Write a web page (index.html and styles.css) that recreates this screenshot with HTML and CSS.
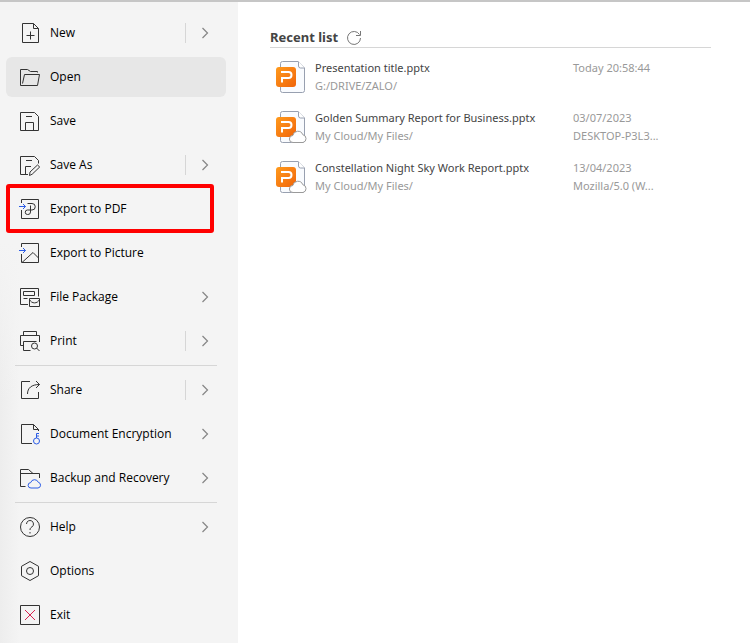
FILE: index.html
```html
<!DOCTYPE html>
<html lang="en">
<head>
    <meta charset="UTF-8">
    <meta name="viewport" content="width=device-width, initial-scale=1.0">
    <title>Open</title>
    <link rel="stylesheet" href="styles.css">
</head>
<body>
    <!-- Shared shapes -->
    <svg class="sprite" aria-hidden="true">
        <defs>
            <linearGradient id="orange" x1="0" y1="0" x2="1" y2="1">
                <stop offset="0" stop-color="#ff9a1c"/>
                <stop offset="1" stop-color="#f0640a"/>
            </linearGradient>
        </defs>
        <symbol id="chevron" viewBox="0 0 8 12">
            <path d="M1.5 1l5 5-5 5" fill="none" stroke="#858585" stroke-width="1.2"/>
        </symbol>
        <symbol id="pptx" viewBox="0 0 32 32">
            <path d="M6.5.5H22l6.5 6.500V29.500a2 2 0 0 1-2 2h-20a2 2 0 0 1-2-2v-27a2 2 0 0 1 2-2z" fill="#f9fbfe" stroke="#98a0b0"/>
            <path d="M22.500.5V5a2 2 0 0 0 2 2h4" fill="#fff" stroke="#98a0b0"/>
            <rect x="0" y="6" width="20" height="20" rx="3" fill="url(#orange)"/>
            <path d="M5 11h7.500a2.500 2.500 0 0 1 0 6H6v4.500" fill="none" stroke="#fff" stroke-width="2"/>
        </symbol>
        <symbol id="cloud" viewBox="0 0 32 32">
            <path d="M17 31.500a3.500 3.500 0 0 1-.2-7 5.200 5.200 0 0 1 10-.8 4 4 0 0 1 .2 7.800z" fill="#fff" stroke="#9a9a9a"/>
        </symbol>
    </svg>

    <div class="window">
        <nav class="sidebar">
            <button class="menu-item">
                <svg class="icon" viewBox="0 0 24 24"><path d="M4.500 2.500h11l5 5v14h-16zM15.500 2.500v5h5M12.500 10.500v8M8.500 14.500h8"/></svg>
                <span class="label">New</span>
                <span class="divider"></span>
                <svg class="chevron"><use href="#chevron"/></svg>
            </button>
            <button class="menu-item active">
                <svg class="icon" viewBox="0 0 24 24"><path d="M19.500 7.500v-1h-7l-3-2h-7v16h17l2-11h-15l-2 9"/></svg>
                <span class="label">Open</span>
            </button>
            <button class="menu-item">
                <svg class="icon" viewBox="0 0 24 24"><path d="M2.500 3.500h14l4 4v14h-18zM8 7.500h6M7.500 21.500v-8h8v8"/></svg>
                <span class="label">Save</span>
            </button>
            <button class="menu-item">
                <svg class="icon" viewBox="0 0 24 24"><path d="M10 21.500H2.500v-18h14l4 4v3M8 7.500h6M7.500 21.500v-8H13M11.500 22.500l.5-3.500 7.500-7 2.200 2-7.500 7.200z"/></svg>
                <span class="label">Save As</span>
                <span class="divider"></span>
                <svg class="chevron"><use href="#chevron"/></svg>
            </button>
            <button class="menu-item marked">
                <svg class="icon" viewBox="0 0 24 24">
                    <path d="M3.500 6V2.500h17v19h-17V13"/>
                    <path d="M9.500 6.500H14a3 3 0 0 1 0 6.500H9.500a2.200 2.200 0 0 0 0 4.500h.5a2.500 2.500 0 0 0 2.500-2.500V8.500"/>
                    <path class="blue" d="M1 9.500h6.500M5 7l2.500 2.500L5 12"/>
                </svg>
                <span class="label">Export to PDF</span>
            </button>
            <button class="menu-item">
                <svg class="icon" viewBox="0 0 24 24">
                    <path d="M3.500 6V2.500h17v19h-17V13M4 21.500l11-10 5.500 5.500"/>
                    <path class="blue" d="M1 9.500h6.500M5 7l2.500 2.500L5 12"/>
                </svg>
                <span class="label">Export to Picture</span>
            </button>
            <button class="menu-item">
                <svg class="icon" viewBox="0 0 24 24"><path d="M10 19.500H2.500v-16h18v8M5.500 6.500h11v4h-11zM5.500 13.500h4M11.500 13.500h10v8h-10zM11.500 14.500c2 4.500 8 4.500 10 0"/></svg>
                <span class="label">File Package</span>
                <svg class="chevron"><use href="#chevron"/></svg>
            </button>
            <button class="menu-item">
                <svg class="icon" viewBox="0 0 24 24"><path d="M5.500 6.500v-4h13v4M5 16.500H2.500v-10h19V13M12.500 21.500h-7v-9h13M18.500 19l3 3"/><circle cx="16.500" cy="17" r="3"/></svg>
                <span class="label">Print</span>
                <span class="divider"></span>
                <svg class="chevron"><use href="#chevron"/></svg>
            </button>
            <hr class="separator">
            <button class="menu-item">
                <svg class="icon" viewBox="0 0 24 24"><path d="M12 3.500H3.500v17h17V14M9.500 16c0-6 4-9.500 12-9.500M18 3l3.500 3.500L18 10"/></svg>
                <span class="label">Share</span>
                <span class="divider"></span>
                <svg class="chevron"><use href="#chevron"/></svg>
            </button>
            <button class="menu-item">
                <svg class="icon" viewBox="0 0 24 24">
                    <path d="M14 21.500H3.500v-19h12l5 5V9M15.500 2.500v5h5"/>
                    <path class="blue" d="M18.500 16v-4.500h2.500M18.500 14h2.500"/>
                    <circle class="blue" cx="18.500" cy="19" r="3"/>
                </svg>
                <span class="label">Document Encryption</span>
                <svg class="chevron"><use href="#chevron"/></svg>
            </button>
            <button class="menu-item">
                <svg class="icon" viewBox="0 0 24 24">
                    <path d="M7.500 20.500h-5v-17h8l4.500 4h6.500V12M2.500 7.500H15"/>
                    <path class="blue" d="M13 22a2.700 2.700 0 0 1-.3-5.400 4 4 0 0 1 7.600-.3A2.900 2.900 0 0 1 20 22z"/>
                </svg>
                <span class="label">Backup and Recovery</span>
                <svg class="chevron"><use href="#chevron"/></svg>
            </button>
            <hr class="separator">
            <button class="menu-item">
                <svg class="icon" viewBox="0 0 24 24"><circle cx="12" cy="12" r="9.500"/><path d="M8.500 9a3.500 3.500 0 1 1 5.300 3c-1.200.8-1.800 1.400-1.800 3M12 17v1.500"/></svg>
                <span class="label">Help</span>
                <svg class="chevron"><use href="#chevron"/></svg>
            </button>
            <button class="menu-item">
                <svg class="icon" viewBox="0 0 24 24"><path d="M12 2.500l8.500 4.800v9.400L12 21.500l-8.500-4.800V7.300z"/><circle cx="12" cy="12" r="3.500"/></svg>
                <span class="label">Options</span>
            </button>
            <button class="menu-item">
                <svg class="icon" viewBox="0 0 24 24"><path d="M2.500 2.500h19v19h-19z"/><path class="red" d="M7 7l10 10M17 7L7 17"/></svg>
                <span class="label">Exit</span>
            </button>
        </nav>

        <main class="content">
            <header class="recent-header">
                <h1>Recent list</h1>
                <button class="refresh" aria-label="Refresh">
                    <svg viewBox="0 0 16 16"><path d="M13.500 4.500A6.500 6.500 0 1 0 14.500 8M14.500 1v4.500H10"/></svg>
                </button>
            </header>
            <ul class="recent-list">
                <li class="recent-file">
                    <svg class="file-icon" viewBox="0 0 32 32"><use href="#pptx"/></svg>
                    <div class="file-info">
                        <div class="file-name">Presentation title.pptx</div>
                        <div>G:/DRIVE/ZALO/</div>
                    </div>
                    <div class="file-meta">
                        <div>Today 20:58:44</div>
                    </div>
                </li>
                <li class="recent-file">
                    <svg class="file-icon" viewBox="0 0 32 32"><use href="#pptx"/><use href="#cloud"/></svg>
                    <div class="file-info">
                        <div class="file-name">Golden Summary Report for Business.pptx</div>
                        <div>My Cloud/My Files/</div>
                    </div>
                    <div class="file-meta">
                        <div>03/07/2023</div>
                        <div>DESKTOP-P3L3...</div>
                    </div>
                </li>
                <li class="recent-file">
                    <svg class="file-icon" viewBox="0 0 32 32"><use href="#pptx"/><use href="#cloud"/></svg>
                    <div class="file-info">
                        <div class="file-name">Constellation Night Sky Work Report.pptx</div>
                        <div>My Cloud/My Files/</div>
                    </div>
                    <div class="file-meta">
                        <div>13/04/2023</div>
                        <div>Mozilla/5.0 (W...</div>
                    </div>
                </li>
            </ul>
        </main>
    </div>
</body>
</html>
```
FILE: styles.css
```css
* {
    box-sizing: border-box;
}

body {
    margin: 0;
    font-family: "Noto Sans", "Open Sans", sans-serif;
    font-size: 12px;
    background: #fff;
    color: #000;
}

.sprite {
    position: absolute;
    width: 0;
    height: 0;
}

.window {
    display: flex;
    min-height: 100vh;
    border-top: 2px solid #c6c6c6;
}

/* Sidebar */
.sidebar {
    flex: 0 0 238px;
    display: flex;
    flex-direction: column;
    gap: 4px;
    padding: 11px 12px 8px 6px;
    font-family: "Open Sans", "Noto Sans", sans-serif;
    background:
        linear-gradient(to bottom, #f4f4f4 240px, transparent 400px),
        linear-gradient(to right, #ededed, #f4f4f4 20px);
}

.menu-item {
    position: relative;
    display: flex;
    align-items: center;
    height: 40px;
    padding: 0 17px 0 12px;
    border: 0;
    border-radius: 6px;
    background: none;
    color: inherit;
    font: inherit;
    text-align: left;
    cursor: pointer;
}

.menu-item:hover,
.menu-item.active {
    background: #e7e7e7;
}

/* Red frame round the marked item */
.menu-item.marked::after {
    content: "";
    position: absolute;
    top: -5px;
    right: 12px;
    bottom: -4px;
    left: 0;
    border: 4px solid #f00;
    border-radius: 3px;
}

.icon {
    width: 24px;
    height: 24px;
    margin-right: 8px;
    fill: none;
    stroke: #333;
}

.icon .blue {
    stroke: #2b5ce6;
}

.icon .red {
    stroke: #d8234f;
}

.label {
    flex: 1;
    padding-bottom: 1px;
}

.divider {
    width: 1px;
    height: 20px;
    margin-right: 15px;
    background: #d6d6d6;
}

.chevron {
    width: 8px;
    height: 12px;
}

.separator {
    align-self: stretch;
    height: 1px;
    margin: 0 9px;
    border: 0;
    background: #d6d6d6;
}

/* Recent files */
.content {
    flex: 1;
    min-width: 0;
    padding: 26px 39px 16px 32px;
}

.recent-header {
    display: flex;
    align-items: center;
    gap: 8px;
    border-bottom: 1px solid #d6d6d6;
}

.recent-header h1 {
    margin: 0;
    color: #444;
    font-size: 13px;
    line-height: 19px;
}

.refresh {
    width: 16px;
    height: 16px;
    padding: 0;
    border: 0;
    background: none;
    cursor: pointer;
}

.refresh svg {
    display: block;
    fill: none;
    stroke: #777;
}

.recent-list {
    display: flex;
    flex-direction: column;
    gap: 14px;
    margin: 11px 0 0;
    padding: 0;
    list-style: none;
}

.recent-file {
    display: grid;
    grid-template-columns: 45px 1fr 138px;
    color: #999;
    font-size: 11px;
    line-height: 18px;
}

.file-icon {
    width: 32px;
    height: 32px;
    margin: 2px 0 0 6px;
}

.file-name {
    color: #444;
}
```
